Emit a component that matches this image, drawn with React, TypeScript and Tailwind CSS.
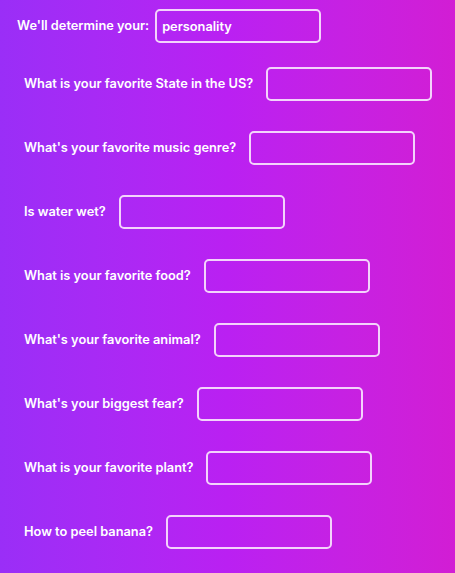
const questions = [
  "What is your favorite State in the US?",
  "What's your favorite music genre?",
  "Is water wet?",
  "What is your favorite food?",
  "What's your favorite animal?",
  "What's your biggest fear?",
  "What is your favorite plant?",
  "How to peel banana?",
]

const App = () => {
  return (
    <div
      className="min-h-screen w-full bg-gradient-to-r from-[#9a2ef7] via-[#ba20f2] to-[#d21dd4] pt-[9px] text-white"
      style={{ fontFamily: "Inter, 'Noto Sans', sans-serif" }}
    >
      <div className="flex items-center gap-[6px] pl-[17px]">
        <span className="text-[12.8px] font-semibold">We'll determine your:</span>
        <input
          defaultValue="personality"
          className="h-[34px] w-[166px] rounded-[5px] border-2 border-[#f3d3fb] bg-transparent px-[5px] text-[12.8px] font-semibold text-white outline-none"
        />
      </div>

      <div className="mt-6 flex flex-col gap-[30px] pl-6">
        {questions.map((q) => (
          <div key={q} className="flex items-center gap-[13px]">
            <span className="text-[12.8px] font-semibold">{q}</span>
            <input className="h-[34px] w-[166px] rounded-[5px] border-2 border-[#f3d3fb] bg-transparent px-[5px] text-[12.8px] text-white outline-none" />
          </div>
        ))}
      </div>
    </div>
  )
}

export default App
